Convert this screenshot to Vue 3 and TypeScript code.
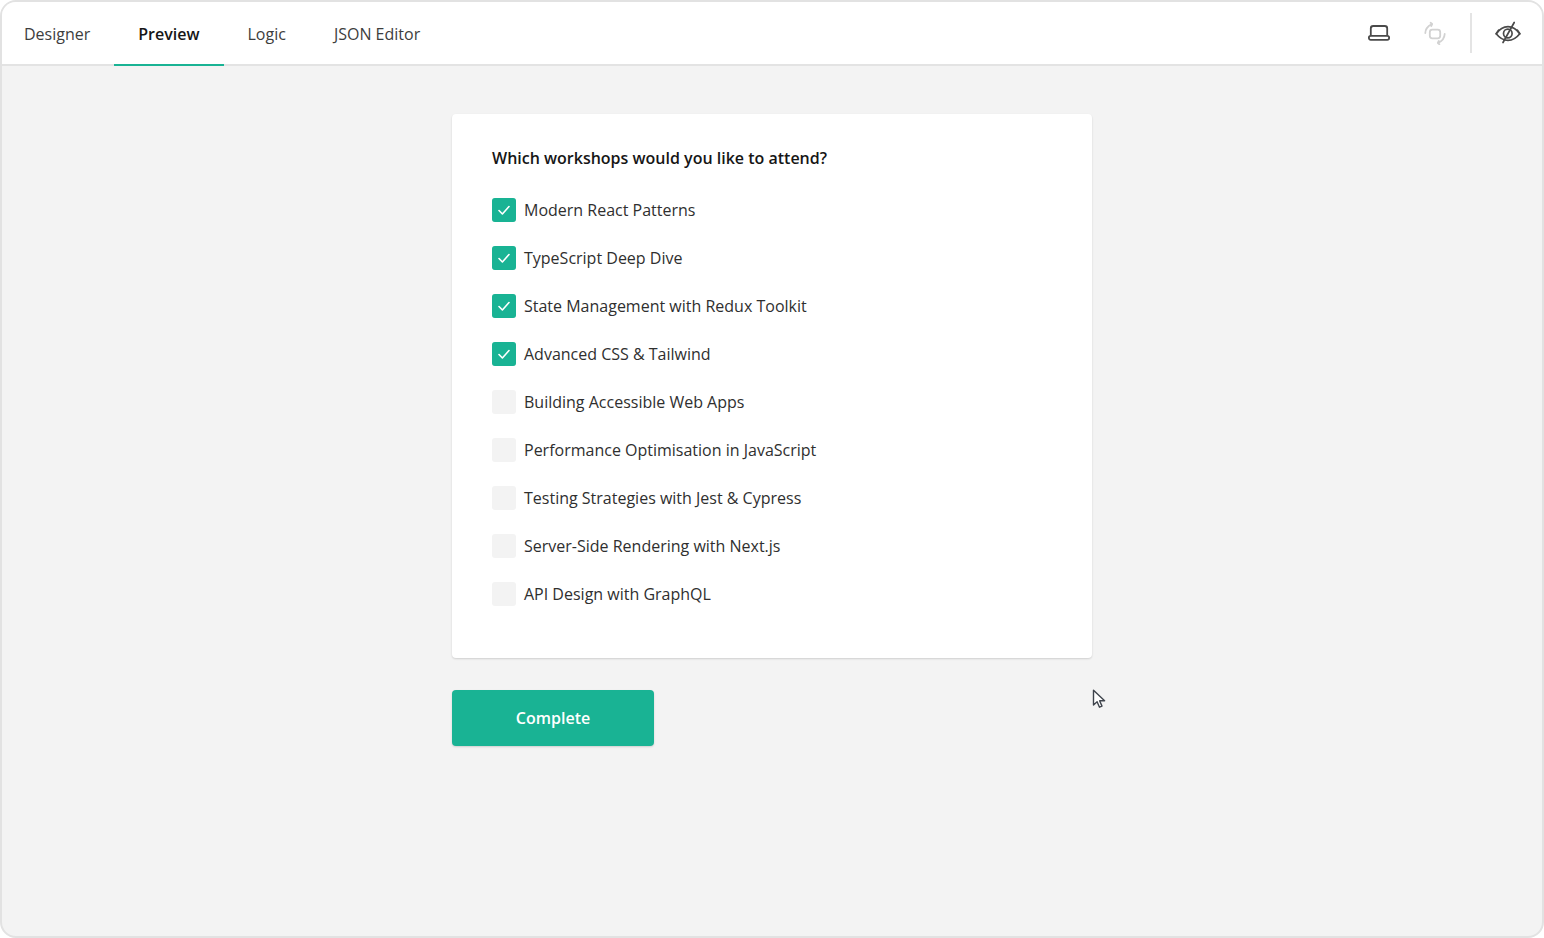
<script setup lang="ts">
interface Option { label: string; checked: boolean }
const tabs: string[] = ['Designer', 'Preview', 'Logic', 'JSON Editor']
const options: Option[] = [
  { label: 'Modern React Patterns', checked: true },
  { label: 'TypeScript Deep Dive', checked: true },
  { label: 'State Management with Redux Toolkit', checked: true },
  { label: 'Advanced CSS & Tailwind', checked: true },
  { label: 'Building Accessible Web Apps', checked: false },
  { label: 'Performance Optimisation in JavaScript', checked: false },
  { label: 'Testing Strategies with Jest & Cypress', checked: false },
  { label: 'Server-Side Rendering with Next.js', checked: false },
  { label: 'API Design with GraphQL', checked: false },
]
</script>

<template>
  <div class="frame">
    <header class="bar">
      <nav class="tabs">
        <div v-for="t in tabs" :key="t" class="tab" :class="{ active: t === 'Preview' }">{{ t }}</div>
      </nav>
      <div class="tools">
        <button class="tool">
          <svg width="24" height="24" viewBox="0 0 24 24" fill="none" stroke="#4a4a4a" stroke-width="1.8" stroke-linejoin="round">
            <path d="M3.800 14.500V7.400C3.800 5.900 4.700 5 6.200 5h11.600c1.500 0 2.400.9 2.400 2.400V14.500" />
            <rect x="1.900" y="14.800" width="20.200" height="4" rx="1.800" />
          </svg>
        </button>
        <button class="tool">
          <svg width="24" height="24" viewBox="0 0 24 24" fill="none" stroke="#d2d2d2" stroke-width="1.800" stroke-linecap="round" stroke-linejoin="round">
            <rect x="6.800" y="8.700" width="10.400" height="8.600" rx="2.500" />
            <path d="M2.300 12C2.500 8.300 4.600 5.200 8.500 3.200M7.600 1.800 9.200 3 8.200 5" />
            <path d="M21.700 13C21.500 16.700 19.400 19.800 15.500 21.800M16.400 23.200 14.800 22 15.800 20" />
          </svg>
        </button>
        <span class="divider"></span>
        <button class="tool">
          <svg width="26" height="24" viewBox="0 0 26 24" fill="none" stroke="#4a4a4a" stroke-width="1.700" stroke-linecap="round" stroke-linejoin="round">
            <path d="M1.200 12.800C4.500 8 8.800 5.600 13 5.600s8.500 2.400 11.800 7.200C21.500 17 17.200 19.400 13 19.400S4.500 17 1.200 12.800Z" />
            <path d="M1.200 12.800 3.600 9.200M24.800 12.800 22.400 9.200" />
            <circle cx="12.800" cy="12.500" r="4.300" />
            <path d="M19.200 1.500 8 21.500" />
          </svg>
        </button>
      </div>
    </header>

    <main class="body">
      <div class="column">
        <section class="card">
          <h2 class="question">Which workshops would you like to attend?</h2>
          <ul class="list">
            <li v-for="o in options" :key="o.label" class="item">
              <span class="box" :class="{ on: o.checked }">
                <svg v-if="o.checked" width="14" height="14" viewBox="0 0 14 14" fill="none" stroke="#fff" stroke-width="1.600" stroke-linecap="round" stroke-linejoin="round">
                  <path d="M2 7.500 5.400 11 12 3.500" />
                </svg>
              </span>
              <span class="label">{{ o.label }}</span>
            </li>
          </ul>
        </section>
        <button class="complete">Complete</button>
      </div>
    </main>

    <svg class="cursor" width="16" height="22" viewBox="0 0 16 22" fill="#fff" stroke="#3f444c" stroke-width="1.400" stroke-linejoin="round">
      <path d="M1.500 1.200V16l3.600-3.200 2.400 5.400 2.500-1.100-2.400-5.300h5Z" />
    </svg>
  </div>
</template>

<style>
html, body { margin: 0; background: #fff; }
</style>

<style scoped>
.frame {
  position: relative;
  box-sizing: border-box;
  height: 938px;
  display: flex;
  flex-direction: column;
  border: 2px solid #e2e2e2;
  border-radius: 16px;
  overflow: hidden;
  background: #f3f3f3;
  font-family: "Open Sans", sans-serif;
  color: #3a3a3a;
}
.bar {
  box-sizing: border-box;
  height: 64px;
  flex: none;
  display: flex;
  justify-content: space-between;
  background: #fff;
  border-bottom: 2px solid #e3e3e3;
}
.tabs { display: flex; margin-left: -2px; }
.tab {
  box-sizing: border-box;
  height: 64px;
  padding: 2px 24px 0;
  display: flex;
  align-items: center;
  font-size: 16px;
  color: #3d3d3d;
  border-bottom: 2px solid transparent;
}
.tab.active {
  font-weight: 600;
  color: #161616;
  border-bottom-color: #19b394;
}
.tools { display: flex; align-items: center; margin-right: 6px; }
.tool {
  width: 56px;
  height: 40px;
  padding: 0;
  display: flex;
  align-items: center;
  justify-content: center;
  border: 0;
  background: none;
}
.divider { width: 2px; height: 40px; margin: 0 8px 0 7px; background: #e4e4e4; }
.body {
  flex: 1;
  display: flex;
  justify-content: center;
  padding-top: 48px;
}
.column { width: 640px; display: flex; flex-direction: column; align-items: flex-start; }
.card {
  box-sizing: border-box;
  width: 640px;
  height: 544px;
  padding: 32px 40px;
  background: #fff;
  border-radius: 4px;
  box-shadow: 0 1px 2px rgba(0, 0, 0, 0.15);
}
.question {
  margin: 0;
  font-size: 16px;
  line-height: 24px;
  font-weight: 600;
  color: #161616;
}
.list { list-style: none; margin: 24px 0 0; padding: 0; display: flex; flex-direction: column; gap: 16px; }
.item { display: flex; align-items: center; gap: 8px; height: 32px; }
.box {
  box-sizing: border-box;
  width: 24px;
  height: 24px;
  display: flex;
  align-items: center;
  justify-content: center;
  border-radius: 3px;
  background: #f3f3f3;
}
.box.on { background: #19b394; box-shadow: 0 0 0 1px rgba(25, 179, 148, 0.25) inset; }
.label { font-size: 16px; line-height: 24px; color: #2f2f2f; }
.complete {
  margin-top: 32px;
  width: 202px;
  height: 56px;
  padding: 0;
  border: 0;
  border-radius: 4px;
  background: #19b394;
  color: #fff;
  font-family: inherit;
  font-size: 16px;
  font-weight: 600;
  box-shadow: 0 1px 2px rgba(0, 0, 0, 0.15);
}
.cursor { position: absolute; left: 1090px; top: 687px; }
</style>
